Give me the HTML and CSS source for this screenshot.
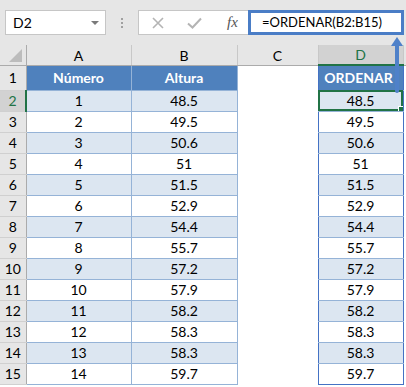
FILE: index.html
```html
<!DOCTYPE html>
<html lang="es">
  <head>
    <meta charset="UTF-8" />
    <meta name="viewport" content="width=device-width, initial-scale=1.0" />
    <title>ORDENAR</title>
    <link rel="stylesheet" href="styles.css">
  </head>
  <body>
    <div class="toolbar">
      <div class="namebox">
        <span>D2</span>
        <span class="caret"></span>
      </div>
      <div class="grip"><i></i><i></i><i></i></div>
      <div class="fbuttons">
        <svg class="fbtn" width="12" height="12" viewBox="0 0 12 12">
          <path d="M1 1 L11 11 M11 1 L1 11" stroke="#b4b4b4" stroke-width="1.6" fill="none" />
        </svg>
        <svg class="fbtn" width="15" height="12" viewBox="0 0 15 12">
          <path d="M1 6.5 L5.5 10.5 L14 1.5" stroke="#b4b4b4" stroke-width="2" fill="none" />
        </svg>
        <span class="fx">fx</span>
      </div>
      <div class="formula">=ORDENAR(B2:B15)</div>
    </div>

    <div class="sheet">
      <table class="grid">
        <colgroup>
          <col class="c-head" />
          <col class="c-a" />
          <col class="c-b" />
          <col class="c-c" />
          <col class="c-d" />
          <col class="c-e" />
        </colgroup>
        <thead>
          <tr class="colhead">
            <th class="corner"><span class="tri"></span></th>
            <th>A</th>
            <th>B</th>
            <th>C</th>
            <th class="sel">D</th>
            <th class="edge"></th>
          </tr>
        </thead>
        <tbody id="rows">
          <tr class="r1">
            <th class="rowhead">1</th>
            <td class="tb hd">Número</td>
            <td class="tb hd">Altura</td>
            <td class="blank"></td>
            <td class="td hd">ORDENAR</td>
            <td class="blank"></td>
          </tr>
        </tbody>
      </table>
      <svg class="arrow" width="14" height="58" viewBox="0 0 14 58">
        <path d="M7 1 L13 10 L1 10 Z" fill="#4f81c9" />
        <line x1="7" y1="9" x2="7" y2="55" stroke="#4f81c9" stroke-width="4" stroke-linecap="round" />
      </svg>
    </div>

    <script>
      const alturas = [48.5, 49.5, 50.6, 51, 51.5, 52.9, 54.4, 55.7, 57.2, 57.9, 58.2, 58.3, 58.3, 59.7];
      const ordenadas = [...alturas].sort((a, b) => a - b);
      const tbody = document.getElementById("rows");

      alturas.forEach((altura, i) => {
        const tr = document.createElement("tr");
        tr.className = i % 2 === 0 ? "band" : "plain";
        const fila = i + 2;
        tr.innerHTML =
          `<th class="rowhead${fila === 2 ? " sel" : ""}">${fila}</th>` +
          `<td class="tb">${i + 1}</td>` +
          `<td class="tb">${altura}</td>` +
          `<td class="blank"></td>` +
          `<td class="td${fila === 2 ? " active" : ""}${fila === 15 ? " last" : ""}">${ordenadas[i]}</td>` +
          `<td class="blank"></td>`;
        tbody.appendChild(tr);
      });
    </script>
  </body>
</html>
```

FILE: styles.css
```css
body {
  margin: 0;
  background: #ffffff;
  font-family: Lato, "Liberation Sans", Arial, sans-serif;
  color: #000;
  overflow: hidden;
}

.toolbar {
  height: 45px;
  background: #e6e6e6;
  display: flex;
  align-items: flex-start;
  padding-top: 10px;
  box-sizing: border-box;
}

.namebox {
  margin-left: 5px;
  width: 101px;
  height: 25px;
  box-sizing: border-box;
  background: #fff;
  border: 1px solid #c6c6c6;
  display: flex;
  align-items: center;
  justify-content: space-between;
  padding: 0 6px 0 7px;
  font-size: 14px;
}

.caret {
  width: 0;
  height: 0;
  border-left: 4px solid transparent;
  border-right: 4px solid transparent;
  border-top: 4px solid #7a7a7a;
}

.grip {
  width: 32px;
  height: 25px;
  display: flex;
  flex-direction: column;
  align-items: center;
  justify-content: center;
  gap: 2px;
}

.grip i {
  width: 2px;
  height: 2px;
  background: #a0a0a0;
}

.fbuttons {
  width: 110px;
  height: 25px;
  box-sizing: border-box;
  background: #fff;
  border: 1px solid #c6c6c6;
  border-right: none;
  display: flex;
  align-items: center;
  padding-left: 13px;
  gap: 23px;
}

.fx {
  font-family: "Liberation Serif", serif;
  font-style: italic;
  font-size: 15px;
  color: #555;
  margin-left: 2px;
}

.formula {
  width: 156px;
  height: 25px;
  box-sizing: border-box;
  background: #fff;
  border: 3px solid #4a7dc6;
  padding-left: 11px;
  font-size: 13px;
  line-height: 19px;
}

.sheet {
  position: relative;
}

.grid {
  border-collapse: collapse;
  table-layout: fixed;
  width: 406px;
  font-size: 14px;
}

.c-head { width: 26px; }
.c-a { width: 105px; }
.c-b { width: 106px; }
.c-c { width: 81px; }
.c-d { width: 85px; }
.c-e { width: 3px; }

th,
td {
  padding: 0;
  text-align: center;
  white-space: nowrap;
  overflow: hidden;
}

.colhead th {
  height: 19px;
  background: #e6e6e6;
  font-weight: normal;
  border-left: 1px solid #c8c8c8;
  border-bottom: 1px solid #ababab;
  vertical-align: bottom;
  line-height: 18px;
}

.colhead .corner {
  border-left: none;
  border-right: 1px solid #ababab;
  position: relative;
}

.tri {
  position: absolute;
  right: 4px;
  bottom: 3px;
  width: 0;
  height: 0;
  border-left: 13px solid transparent;
  border-bottom: 13px solid #bcbcbc;
}

.colhead .sel {
  background: #d2d2d2;
  color: #217346;
  border-bottom: 2px solid #217346;
}

.colhead .edge {
  border-left: 1px solid #c8c8c8;
}

tbody tr {
  height: 21px;
}

tbody .r1 {
  height: 25px;
}

.rowhead {
  background: #e6e6e6;
  font-weight: normal;
  border-right: 1px solid #ababab;
  border-bottom: 1px solid #d0d0d0;
  font-size: 14px;
}

.rowhead.sel {
  background: #d2d2d2;
  color: #217346;
  border-right: 2px solid #217346;
}

.tb {
  border: 1px solid #95b3d7;
}

.band .tb,
.band .td {
  background: #dce6f1;
}

.hd {
  background: #4f81bd;
  color: #fff;
  font-weight: bold;
}

.td {
  border-left: 1px solid #4472c4;
  border-right: 1px solid #4472c4;
  border-bottom: 1px solid #95b3d7;
}

.td.last {
  border-bottom: 1px solid #4472c4;
}

.r1 .td {
  border-top: 1px solid #4472c4;
  padding-right: 4px;
}

.td.active {
  position: relative;
  outline: 2px solid #217346;
  outline-offset: -2px;
}

.td.active::after {
  content: "";
  position: absolute;
  right: -2px;
  bottom: -2px;
  width: 5px;
  height: 5px;
  background: #217346;
  border: 1px solid #fff;
}

.blank {
  background: #fff;
}

.arrow {
  position: absolute;
  left: 390px;
  top: -9px;
}
```
